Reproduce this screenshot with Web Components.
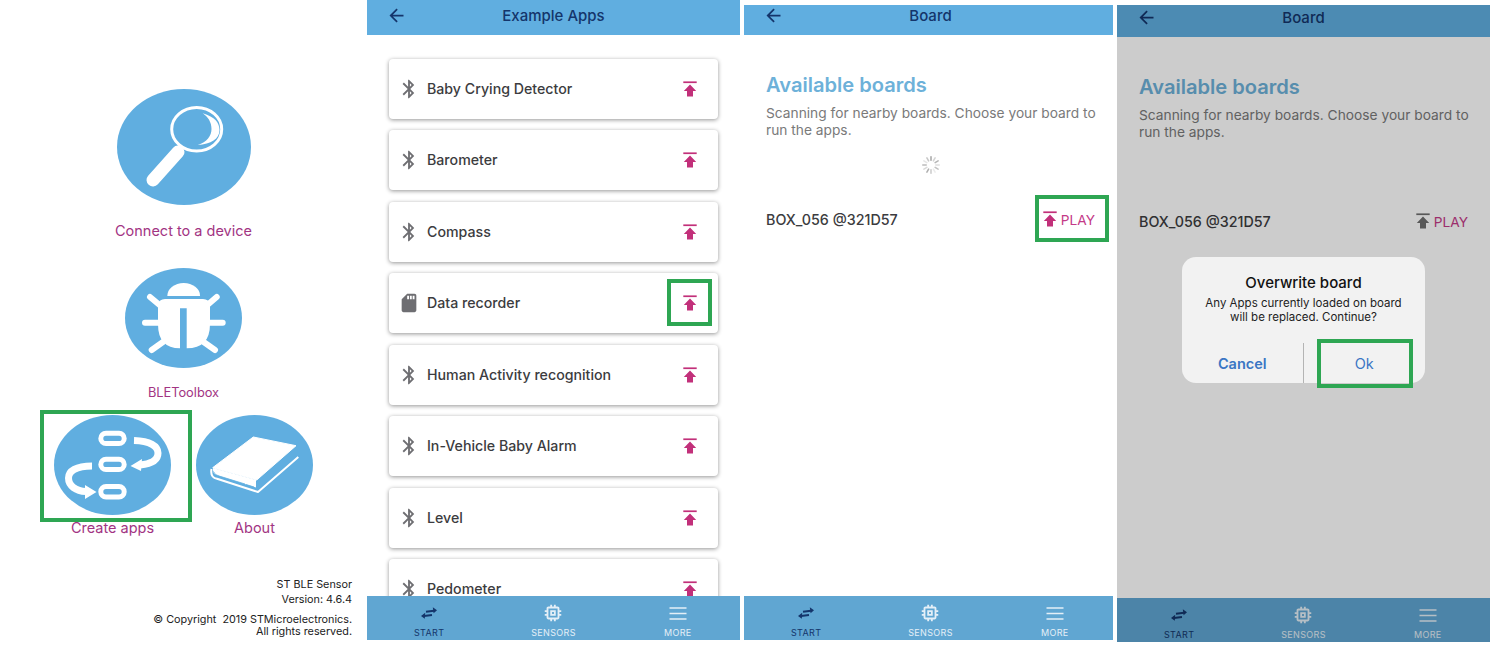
<!DOCTYPE html>
<html lang="en">
<head>
<meta charset="utf-8">
<title>ST BLE Sensor</title>
<style>
  html, body { margin: 0; background: #fff; }
  body {
    width: 1494px;
    height: 645px;
    overflow: hidden;
    display: flex;
    align-items: flex-start;
    font-family: Inter, "Liberation Sans", sans-serif;
  }
</style>
</head>
<body>
  <home-screen></home-screen>
  <apps-screen></apps-screen>
  <board-screen style="--panel-width:369px;--panel-gap:4px;--panel-height:635px;--bar-height:30px;--bar-pad:10px"></board-screen>
  <board-screen dialog style="--panel-height:637px;--bar-height:32px;--bar-pad:8px"></board-screen>

<script>
const ICONS = {
  back: '<path d="M20 11H7.83l5.59-5.59L12 4l-8 8 8 8 1.41-1.41L7.83 13H20v-2z"/>',
  bluetooth: '<path d="M17.71 7.71L12 2h-1v7.59L6.41 5 5 6.41 10.59 12 5 17.59 6.41 19 11 14.41V22h1l5.71-5.71-4.3-4.29 4.3-4.29zM13 5.83l1.88 1.88L13 9.59V5.83zm1.88 10.46L13 18.17v-3.76l1.88 1.88z"/>',
  sdcard: '<path d="M18 2h-8L4.02 8 4 20c0 1.1.9 2 2 2h12c1.1 0 2-.9 2-2V4c0-1.1-.9-2-2-2zm-6 6h-2V4h2v4zm3 0h-2V4h2v4zm3 0h-2V4h2v4z"/>',
  chip: '<path d="M15 9H9v6h6V9zm-2 4h-2v-2h2v2zm8-2V9h-2V7c0-1.1-.9-2-2-2h-2V3h-2v2h-2V3H9v2H7c-1.1 0-2 .9-2 2v2H3v2h2v2H3v2h2v2c0 1.1.9 2 2 2h2v2h2v-2h2v2h2v-2h2c1.1 0 2-.9 2-2v-2h2v-2h-2v-2h2zm-4 6H7V7h10v10z"/>',
};

const svgIcon = (name, size) =>
  `<svg width="${size}" height="${size}" viewBox="0 0 24 24" fill="currentColor" aria-hidden="true">${ICONS[name]}</svg>`;

const HOME_ICONS = {
  search: `<svg width="134" height="116" viewBox="0 0 134 116">
      <ellipse cx="67" cy="58" rx="67" ry="58" fill="#60aee0"/>
      <ellipse cx="79.7" cy="40.3" rx="25" ry="21.8" fill="none" stroke="#fff" stroke-width="3"/>
      <path d="M85.7 24.3C98 28 102.5 34 102.5 41C102.5 50 94 55 80.7 56C90 53 94.5 47 94.5 40C94.5 33 91 28 85.7 24.3z" fill="#fff"/>
      <path d="M61 63L36 91" stroke="#fff" stroke-width="13" stroke-linecap="round"/>
    </svg>`,
  bug: `<svg width="117" height="100" viewBox="0 0 117 100">
      <ellipse cx="58.5" cy="50" rx="58.5" ry="50" fill="#60aee0"/>
      <path d="M42.3 28a16.4 13 0 0 1 32.8 0z" fill="#fff"/>
      <path d="M40 31H78Q84 31 85 37V56Q85 80.3 61.7 80.3V40.3H55V80.3Q33 80.3 33 56V37Q34 31 40 31z" fill="#fff"/>
      <g stroke="#fff" stroke-width="6" stroke-linecap="round" fill="none">
        <path d="M25 29L37 39M91.7 29L80 39M20 54.7H34M84 54.7H97.7M26.7 82L38.3 73.7M90 82L78.3 73.7"/>
      </g>
    </svg>`,
  flow: `<svg width="117" height="100" viewBox="0 0 117 100">
      <ellipse cx="58.5" cy="50" rx="58.5" ry="50" fill="#60aee0"/>
      <g fill="none" stroke="#fff" stroke-width="5">
        <rect x="46.8" y="18.2" width="23.4" height="10.4" rx="5.2"/>
        <rect x="46.8" y="44.2" width="23.4" height="10.4" rx="5.2"/>
        <rect x="46.8" y="71.5" width="23.4" height="10.4" rx="5.2"/>
        <path stroke-width="7" d="M80 25.5C96 26 104 31 104 38C104 46 96 49 86 50"/>
        <path stroke-width="7" d="M38 51C22 51 14.5 56 14.5 63C14.5 71 22 76 32 76.5"/>
      </g>
      <path d="M76.5 51L88 44L87 56zM42.5 77L31 70L31 84z" fill="#fff"/>
    </svg>`,
  book: `<svg width="117" height="100" viewBox="0 0 117 100">
      <ellipse cx="58.5" cy="50" rx="58.5" ry="50" fill="#60aee0"/>
      <path d="M57.3 22L100 30.7L60.7 65L16.7 52.7z" fill="#fff" stroke="#fff" stroke-linejoin="round"/>
      <path d="M15.5 54Q14 62.5 21 63.8L62 77L102.3 42" fill="none" stroke="#fff" stroke-width="2" stroke-linejoin="round"/>
      <path d="M17 55Q17 59.5 22 60.5L60 72.5V65L17 53z" fill="#fff"/>
      <path d="M17.5 56.5Q18.5 60 23 61L49 69M50 69.5L58 72" fill="none" stroke="#60aee0" stroke-width=".8"/>
    </svg>`,
};

const TILES_FONT = `font-family: Inter, "Liberation Sans", sans-serif;`;

class FocusRing extends HTMLElement {
  connectedCallback() {
    this.attachShadow({ mode: "open" }).innerHTML = `
      <style>
        :host {
          position: absolute;
          display: block;
          box-sizing: border-box;
          border: 4.5px solid #2ea653;
          pointer-events: none;
        }
      </style>`;
  }
}

class UploadIcon extends HTMLElement {
  connectedCallback() {
    this.attachShadow({ mode: "open" }).innerHTML = `
      <style>
        :host { display: block; width: 14px; height: 16px; color: var(--upload-color, #c2307a); }
        svg { display: block; }
      </style>
      <svg width="14" height="16" viewBox="0 0 14 16" fill="currentColor" aria-hidden="true">
        <rect x="0.3" y="0.4" width="13.4" height="1.7"/>
        <path d="M7 3.4L13.2 9.9H10V15.6H4V9.9H0.8z"/>
      </svg>`;
  }
}

class HomeTile extends HTMLElement {
  connectedCallback() {
    const icon = this.getAttribute("icon");
    this.attachShadow({ mode: "open" }).innerHTML = `
      <style>
        :host {
          position: relative;
          display: flex;
          flex-direction: column;
          align-items: center;
          ${TILES_FONT}
        }
        svg { display: block; }
        .label {
          margin-top: var(--label-gap, 3px);
          font-size: var(--label-size, 14.5px);
          line-height: var(--label-line, 20px);
          color: #a23483;
          white-space: nowrap;
        }
      </style>
      ${HOME_ICONS[icon]}
      <div class="label">${this.getAttribute("label")}</div>
      <slot></slot>`;
  }
}

class HomeScreen extends HTMLElement {
  connectedCallback() {
    this.attachShadow({ mode: "open" }).innerHTML = `
      <style>
        :host {
          display: flex;
          flex-direction: column;
          align-items: center;
          flex: none;
          width: 367px;
          height: 645px;
          padding-top: 89px;
          box-sizing: border-box;
          ${TILES_FONT}
        }
        .row {
          display: grid;
          grid-template-columns: 142px 142px;
          margin-top: 13px;
        }
        footer {
          align-self: stretch;
          margin: 38.5px 15px 0 0;
          text-align: right;
          color: #222;
          font-size: 10.8px;
        }
        .version { line-height: 15px; }
        .legal { line-height: 12px; margin-top: 7.5px; }
      </style>
      <home-tile icon="search" label="Connect to a device" style="--label-gap:16px;margin-bottom:27px"></home-tile>
      <home-tile icon="bug" label="BLEToolbox" style="--label-gap:16px;--label-size:12.8px;--label-line:18px"></home-tile>
      <div class="row">
        <home-tile icon="flow" label="Create apps">
          <focus-ring style="left:-1.5px;top:-5px;width:152px;height:112px"></focus-ring>
        </home-tile>
        <home-tile icon="book" label="About"></home-tile>
      </div>
      <footer>
        <div class="version">ST BLE Sensor<br>Version: 4.6.4</div>
        <div class="legal">© Copyright&nbsp; 2019 STMicroelectronics.<br>All rights reserved.</div>
      </footer>`;
  }
}

class AppBar extends HTMLElement {
  connectedCallback() {
    this.attachShadow({ mode: "open" }).innerHTML = `
      <style>
        :host {
          display: grid;
          grid-template-columns: 1fr auto 1fr;
          align-items: center;
          flex: none;
          height: var(--bar-height, 35px);
          box-sizing: border-box;
          padding-bottom: var(--bar-pad, 5px);
          background: #60aee0;
          color: #14356b;
          font-size: 15px;
          font-weight: 500;
        }
        svg { display: block; margin-left: 18.5px; }
      </style>
      ${svgIcon("back", 21)}
      <span>${this.getAttribute("title")}</span>
      <span></span>`;
  }
}

class TabBar extends HTMLElement {
  connectedCallback() {
    const tab = (icon, label, active) => `
      <div class="tab ${active ? "active" : ""}"><div class="glyph">${icon}</div><span>${label}</span></div>`;
    const swap = `<svg width="16" height="12" viewBox="0 0 16 12" aria-hidden="true">
        <path d="M5 4.8L13 3.8M11 8L3 9" stroke="currentColor" stroke-width="2" fill="none"/>
        <path d="M11.8 .3L16 3.2L12.6 6.2zM4.2 5.8L0 9.1L3.8 11.8z" fill="currentColor"/>
      </svg>`;
    const menu = `<svg width="18" height="13" viewBox="0 0 18 13" aria-hidden="true">
        <path d="M.5 1H17.5M.5 6.5H17.5M.5 12H17.5" stroke="currentColor" stroke-width="1.4"/>
      </svg>`;
    this.attachShadow({ mode: "open" }).innerHTML = `
      <style>
        :host {
          display: grid;
          grid-template-columns: repeat(3, 1fr);
          flex: none;
          height: 44px;
          background: #60a6d2;
          color: #e4eff7;
        }
        .tab {
          display: flex;
          flex-direction: column;
          align-items: center;
          padding-top: 7px;
        }
        .glyph {
          display: flex;
          align-items: center;
          justify-content: center;
          height: 20px;
        }
        .glyph svg { display: block; }
        .tab span {
          margin-top: 4px;
          font-size: 9px;
          line-height: 12px;
          letter-spacing: .35px;
        }
        .active { color: #14356b; }
      </style>
      ${tab(swap, "START", true)}
      ${tab(svgIcon("chip", 22), "SENSORS")}
      ${tab(menu, "MORE")}`;
  }
}

class AppCard extends HTMLElement {
  connectedCallback() {
    this.attachShadow({ mode: "open" }).innerHTML = `
      <style>
        :host {
          position: relative;
          display: flex;
          align-items: center;
          flex: none;
          height: 60px;
          box-sizing: border-box;
          padding: 0 21px 0 9px;
          background: #fff;
          border-radius: 4px;
          box-shadow: 0 1px 4px rgba(0,0,0,.42);
          color: #3c3c40;
          font-size: 14.2px;
          font-weight: 500;
        }
        svg { display: block; color: #6e6e72; }
        .name { flex: 1; margin: 0 0 1px 7px; }
      </style>
      ${svgIcon(this.getAttribute("icon") || "bluetooth", 22)}
      <span class="name"><slot></slot></span>
      <upload-icon></upload-icon>
      ${this.hasAttribute("highlight") ? '<focus-ring style="right:6px;top:6px;width:45px;height:47px"></focus-ring>' : ""}`;
  }
}

class AppsScreen extends HTMLElement {
  connectedCallback() {
    const names = ["Baby Crying Detector", "Barometer", "Compass", "Data recorder",
      "Human Activity recognition", "In-Vehicle Baby Alarm", "Level", "Pedometer"];
    const cards = names.map((name) => name === "Data recorder"
      ? `<app-card icon="sdcard" highlight>${name}</app-card>`
      : `<app-card>${name}</app-card>`).join("");
    this.attachShadow({ mode: "open" }).innerHTML = `
      <style>
        :host {
          display: flex;
          flex-direction: column;
          flex: none;
          width: 373px;
          height: 640px;
          margin-right: 4px;
        }
        .list {
          flex: 1;
          min-height: 0;
          overflow: hidden;
          display: flex;
          flex-direction: column;
          gap: 11.43px;
          padding: 24px 22px 0;
        }
      </style>
      <app-bar title="Example Apps"></app-bar>
      <div class="list">${cards}</div>
      <tab-bar></tab-bar>`;
  }
}

class LoadSpinner extends HTMLElement {
  connectedCallback() {
    let ticks = "";
    for (let i = 0; i < 12; i++) {
      const shade = 170 + ((i * 7) % 12) * 6;
      ticks += `<rect x="9.2" y="1" width="1.6" height="5" rx=".8" fill="rgb(${shade},${shade},${shade})" transform="rotate(${i * 30} 10 10)"/>`;
    }
    this.attachShadow({ mode: "open" }).innerHTML = `
      <style>
        :host { display: block; width: 20px; height: 20px; }
        svg { display: block; }
      </style>
      <svg width="20" height="20" viewBox="0 0 20 20" aria-hidden="true">${ticks}</svg>`;
  }
}

class ConfirmDialog extends HTMLElement {
  connectedCallback() {
    this.attachShadow({ mode: "open" }).innerHTML = `
      <style>
        :host {
          display: block;
          width: 243px;
          height: 126px;
          box-sizing: border-box;
          padding-top: 17px;
          background: #f2f2f2;
          border-radius: 14px;
          text-align: center;
          color: #111;
        }
        h2 { margin: 0; font-size: 15px; line-height: 18px; font-weight: 500; }
        p { margin: 4px 0 0; font-size: 11.5px; line-height: 14px; color: #222; }
        .actions {
          display: grid;
          grid-template-columns: 1fr 1fr;
          height: 40px;
          margin-top: 19px;
          color: #3a76c4;
          font-size: 14.5px;
        }
        .actions div {
          position: relative;
          display: flex;
          align-items: center;
          justify-content: center;
        }
        .cancel { font-weight: 600; border-right: 1px solid #b4b4b4; }
      </style>
      <h2>Overwrite board</h2>
      <p>Any Apps currently loaded on board<br>will be replaced. Continue?</p>
      <div class="actions">
        <div class="cancel">Cancel</div>
        <div>Ok<focus-ring style="left:13.5px;top:-4px;width:96px;height:49px"></focus-ring></div>
      </div>`;
  }
}

class BoardScreen extends HTMLElement {
  connectedCallback() {
    const modal = this.hasAttribute("dialog");
    this.attachShadow({ mode: "open" }).innerHTML = `
      <style>
        :host {
          position: relative;
          display: block;
          flex: none;
          width: var(--panel-width, 373px);
          height: var(--panel-height);
          margin: 5px var(--panel-gap, 0) 0 0;
          overflow: hidden;
        }
        .inner {
          display: flex;
          flex-direction: column;
          width: 373px;
          height: 100%;
        }
        main { flex: 1; padding: 37px 22px 0; }
        h1 {
          margin: 0;
          font-size: 20.1px;
          line-height: 26px;
          font-weight: 600;
          color: #6db1d9;
        }
        p {
          margin: 6.5px -4px 0 0;
          font-size: 13.75px;
          line-height: 17px;
          color: #7a7a7a;
        }
        load-spinner {
          margin: 16.5px auto 0;
          visibility: ${modal ? "hidden" : "visible"};
        }
        .row {
          display: flex;
          align-items: center;
          justify-content: space-between;
          height: 24px;
          margin-top: 32px;
          color: #3c3c40;
          font-size: 14.3px;
          font-weight: 500;
        }
        .play {
          position: relative;
          display: flex;
          align-items: center;
          gap: 4px;
          color: #c43a87;
          font-size: 13.7px;
          font-weight: 400;
          --upload-color: ${modal ? "#6f6f6f" : "#c2307a"};
        }
        .play span { padding-top: 1px; }
        .scrim {
          position: absolute;
          inset: 0;
          display: flex;
          flex-direction: column;
          align-items: center;
          padding-top: 252px;
          background: rgba(0,0,0,.2);
        }
      </style>
      <div class="inner">
        <app-bar title="Board"></app-bar>
        <main>
          <h1>Available boards</h1>
          <p>Scanning for nearby boards. Choose your board to run the apps.</p>
          <load-spinner></load-spinner>
          <div class="row">
            <span>BOX_056 @321D57</span>
            <div class="play">
              <upload-icon></upload-icon><span>PLAY</span>
              ${modal ? "" : '<focus-ring style="left:-8px;top:-16px;width:74.5px;height:47px"></focus-ring>'}
            </div>
          </div>
        </main>
        <tab-bar></tab-bar>
      </div>
      ${modal ? '<div class="scrim"><confirm-dialog></confirm-dialog></div>' : ""}`;
  }
}

customElements.define("focus-ring", FocusRing);
customElements.define("upload-icon", UploadIcon);
customElements.define("home-tile", HomeTile);
customElements.define("home-screen", HomeScreen);
customElements.define("app-bar", AppBar);
customElements.define("tab-bar", TabBar);
customElements.define("app-card", AppCard);
customElements.define("apps-screen", AppsScreen);
customElements.define("load-spinner", LoadSpinner);
customElements.define("confirm-dialog", ConfirmDialog);
customElements.define("board-screen", BoardScreen);
</script>
</body>
</html>
